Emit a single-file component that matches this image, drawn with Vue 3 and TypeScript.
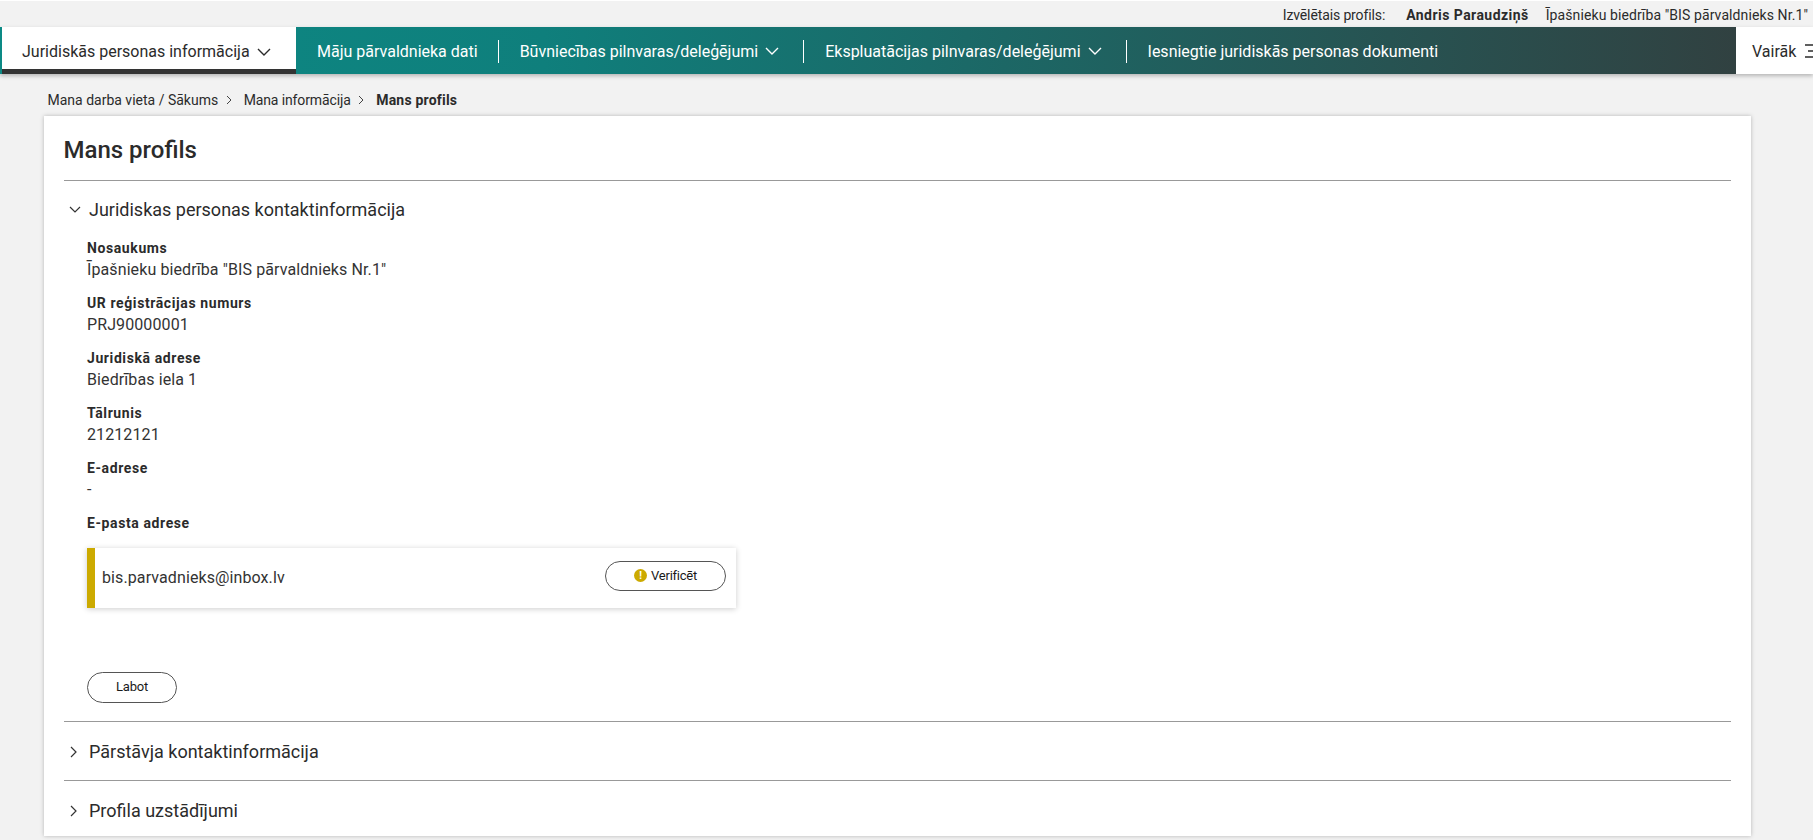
<script setup lang="ts">
const fields = [
  { label: 'Nosaukums', value: 'Īpašnieku biedrība "BIS pārvaldnieks Nr.1"' },
  { label: 'UR reģistrācijas numurs', value: 'PRJ90000001' },
  { label: 'Juridiskā adrese', value: 'Biedrības iela 1' },
  { label: 'Tālrunis', value: '21212121' },
  { label: 'E-adrese', value: '-' },
]
</script>

<template>
  <div class="page">
    <div class="topbar">
      <span class="tight">Izvēlētais profils:</span>
      <strong>Andris Paraudziņš</strong>
      <span>Īpašnieku biedrība "BIS pārvaldnieks Nr.1"</span>
    </div>

    <nav class="nav">
      <div class="nav-active">
        <span>Juridiskās personas informācija</span>
        <svg class="chev-down" viewBox="0 0 14 8"><path d="M1 1l6 6 6-6" /></svg>
      </div>
      <div class="nav-links">
        <a class="nav-link">Māju pārvaldnieka dati</a>
        <a class="nav-link has-menu">
          Būvniecības pilnvaras/deleģējumi
          <svg class="chev-down" viewBox="0 0 14 8"><path d="M1 1l6 6 6-6" /></svg>
        </a>
        <a class="nav-link has-menu">
          Ekspluatācijas pilnvaras/deleģējumi
          <svg class="chev-down" viewBox="0 0 14 8"><path d="M1 1l6 6 6-6" /></svg>
        </a>
        <a class="nav-link">Iesniegtie juridiskās personas dokumenti</a>
      </div>
      <div class="nav-more">
        <span>Vairāk</span>
        <svg class="burger" viewBox="0 0 16 14"><path d="M0 1h16M3 7h13M0 13h16" /></svg>
      </div>
    </nav>

    <div class="crumbs">
      <span>Mana darba vieta / Sākums</span>
      <svg class="crumb-chev" viewBox="0 0 6 10"><path d="M1 1l4 4-4 4" /></svg>
      <span class="tight">Mana informācija</span>
      <svg class="crumb-chev" viewBox="0 0 6 10"><path d="M1 1l4 4-4 4" /></svg>
      <strong>Mans profils</strong>
    </div>

    <main class="card">
      <h1>Mans profils</h1>

      <section class="section open">
        <div class="section-head">
          <svg class="sec-chev" viewBox="0 0 12 8"><path d="M1 1l5 5 5-5" /></svg>
          <h2>Juridiskas personas kontaktinformācija</h2>
        </div>
        <div class="section-body">
          <div v-for="f in fields" :key="f.label" class="field">
            <div class="label">{{ f.label }}</div>
            <div class="value">{{ f.value }}</div>
          </div>
          <div class="label">E-pasta adrese</div>
          <div class="email-box">
            <span class="email">bis.parvadnieks@inbox.lv</span>
            <button class="pill verify">
              <span class="warn">!</span>
              Verificēt
            </button>
          </div>
          <button class="pill edit">Labot</button>
        </div>
      </section>

      <section class="section">
        <div class="section-head">
          <svg class="sec-chev right" viewBox="0 0 8 12"><path d="M1 1l5 5-5 5" /></svg>
          <h2>Pārstāvja kontaktinformācija</h2>
        </div>
      </section>

      <section class="section">
        <div class="section-head">
          <svg class="sec-chev right" viewBox="0 0 8 12"><path d="M1 1l5 5-5 5" /></svg>
          <h2>Profila uzstādījumi</h2>
        </div>
      </section>
    </main>
  </div>
</template>

<style scoped>
.page {
  width: 1813px;
  height: 840px;
  overflow: hidden;
  background: #f2f2f2;
  color: #2b2b2b;
  font-family: Roboto, "Liberation Sans", sans-serif;
  border-top: 1px solid #fff;
  box-sizing: border-box;
}

.topbar {
  height: 26px;
  box-sizing: border-box;
  padding: 2px 5px 0 0;
  display: flex;
  justify-content: flex-end;
  align-items: center;
  font-size: 14px;
  letter-spacing: 0.1px;
}
.topbar strong {
  font-weight: 700;
  letter-spacing: 0.45px;
  margin: 0 17px 0 21px;
}

.nav {
  height: 47px;
  display: flex;
  background: linear-gradient(90deg, #0c8a85 0%, #0f7f7c 30%, #333d3d 100%);
  box-shadow: 0 2px 4px rgba(0, 0, 0, 0.25);
  position: relative;
}
.nav svg {
  fill: none;
  stroke: currentColor;
  stroke-width: 1.4;
}
.nav-active {
  width: 294px;
  margin-left: 2px;
  box-sizing: border-box;
  padding: 7px 0 0 20px;
  display: flex;
  align-items: center;
  gap: 7px;
  background: #fff;
  border-bottom: 5px solid #333;
  font-size: 16px;
}
.chev-down {
  width: 14px;
  height: 8px;
}
.nav-links {
  flex: 1;
  display: flex;
  align-items: center;
  color: #fff;
  font-size: 16px;
  padding-top: 1px;
}
.nav-link {
  display: flex;
  align-items: center;
  gap: 7px;
  height: 23px;
  padding: 0 21px;
  border-left: 1px solid #fff;
}
.nav-link:first-child {
  border-left: 0;
  padding-right: 20px;
}
.nav-link.has-menu {
  padding-right: 24px;
}
.nav-more {
  width: 77px;
  box-sizing: border-box;
  padding: 1px 0 0 16px;
  display: flex;
  align-items: center;
  gap: 9px;
  background: #fff;
  font-size: 16px;
  overflow: hidden;
  flex-shrink: 0;
}
.burger {
  width: 16px;
  height: 14px;
  flex-shrink: 0;
}

.crumbs {
  height: 42px;
  box-sizing: border-box;
  padding: 9px 0 0 47.5px;
  display: flex;
  align-items: center;
  font-size: 14px;
}
.crumb-chev {
  width: 6px;
  height: 10px;
  margin: 0 12px 0 7.5px;
  fill: none;
  stroke: #444;
  stroke-width: 1;
}
.tight {
  letter-spacing: -0.12px;
}
.crumbs strong {
  font-weight: 700;
  letter-spacing: 0.2px;
}

.card {
  width: 1707px;
  height: 720px;
  margin-left: 44px;
  padding: 0 20px;
  box-sizing: border-box;
  background: #fff;
  box-shadow: 0 0 4px rgba(0, 0, 0, 0.25);
}
h1 {
  margin: 0;
  height: 65px;
  line-height: 68px;
  font-size: 24px;
  font-weight: 500;
  text-indent: -0.5px;
  border-bottom: 1px solid #999;
  box-sizing: border-box;
}
h2 {
  margin: 0;
  font-size: 18px;
  font-weight: 400;
}
.section {
  border-top: 1px solid #999;
}
.section:first-of-type {
  border-top: 0;
}
.section-head {
  height: 58px;
  display: flex;
  align-items: center;
  position: relative;
  padding-left: 25px;
}
.open .section-head {
  height: 57px;
}
.sec-chev {
  position: absolute;
  left: 5px;
  top: 25px;
  width: 12px;
  height: 8px;
  fill: none;
  stroke: #333;
  stroke-width: 1.2;
}
.sec-chev.right {
  left: 6px;
  top: 24px;
  width: 8px;
  height: 12px;
}
.section-body {
  padding: 0 23px 18px;
}
.field {
  height: 55px;
}
.label {
  font-size: 14px;
  font-weight: 700;
  letter-spacing: 0.6px;
  line-height: 20px;
}
.value {
  font-size: 16px;
  line-height: 21px;
  margin-top: 1px;
  letter-spacing: 0.1px;
  color: #333;
}
.email-box {
  width: 649px;
  height: 60px;
  margin-top: 15px;
  box-sizing: border-box;
  border-left: 8px solid #ccaa00;
  padding: 0 10px 0 7px;
  display: flex;
  align-items: center;
  justify-content: space-between;
  font-size: 16px;
  color: #333;
  background: #fff;
  box-shadow: 0 1px 6px rgba(0, 0, 0, 0.2);
}
.email {
  letter-spacing: 0.1px;
  margin-bottom: 1px;
}
.pill {
  background: #fff;
  border: 1px solid #555;
  border-radius: 16px;
  color: #1a1a1a;
  font-family: inherit;
  font-size: 13px;
  letter-spacing: -0.25px;
  padding: 0;
}
.verify {
  width: 121px;
  height: 30px;
  margin-bottom: 4px;
  padding-bottom: 2px;
  display: flex;
  align-items: center;
  justify-content: center;
  gap: 4px;
}
.warn {
  width: 13px;
  height: 13px;
  border-radius: 50%;
  background: #ccaa00;
  color: #fff;
  font-size: 10px;
  font-weight: 700;
  line-height: 13px;
  text-align: center;
}
.edit {
  display: block;
  width: 90px;
  height: 31px;
  margin-top: 64px;
  padding-bottom: 2px;
}
</style>

<style>
body {
  margin: 0;
  background: #f2f2f2;
}
</style>
